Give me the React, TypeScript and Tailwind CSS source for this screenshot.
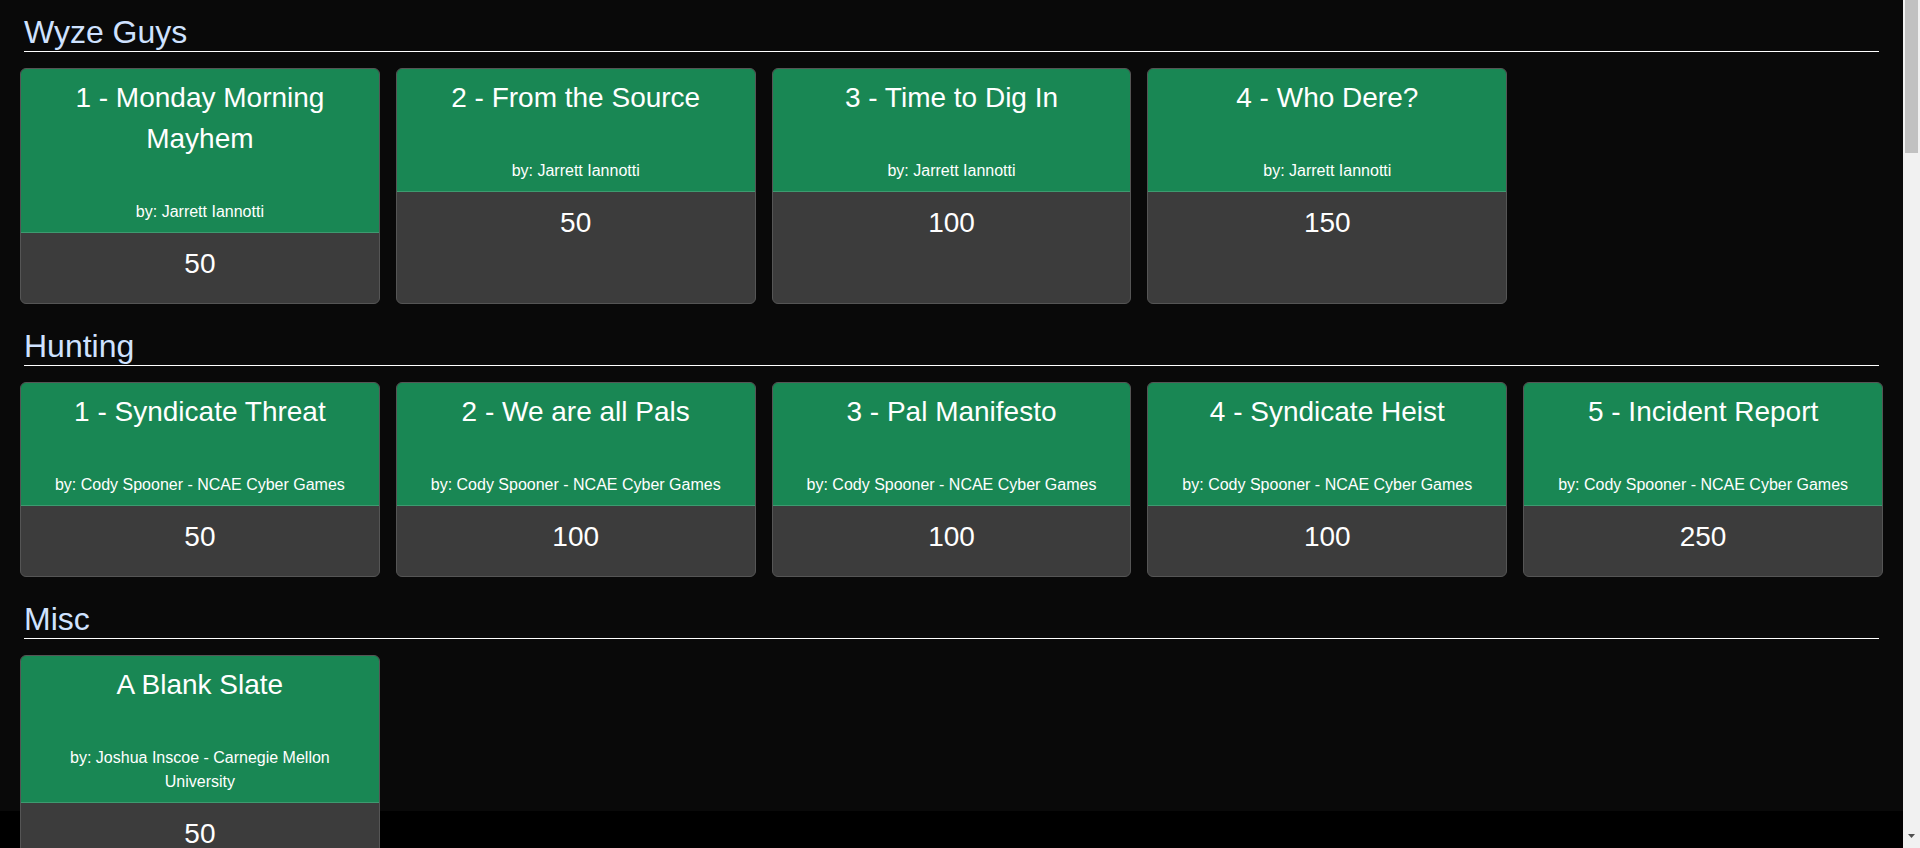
import React from "react";

type Challenge = { title: string; by: string; points: number };
type Section = { name: string; items: Challenge[] };

const sections: Section[] = [
  {
    name: "Wyze Guys",
    items: [
      { title: "1 - Monday Morning Mayhem", by: "Jarrett Iannotti", points: 50 },
      { title: "2 - From the Source", by: "Jarrett Iannotti", points: 50 },
      { title: "3 - Time to Dig In", by: "Jarrett Iannotti", points: 100 },
      { title: "4 - Who Dere?", by: "Jarrett Iannotti", points: 150 },
    ],
  },
  {
    name: "Hunting",
    items: [
      { title: "1 - Syndicate Threat", by: "Cody Spooner - NCAE Cyber Games", points: 50 },
      { title: "2 - We are all Pals", by: "Cody Spooner - NCAE Cyber Games", points: 100 },
      { title: "3 - Pal Manifesto", by: "Cody Spooner - NCAE Cyber Games", points: 100 },
      { title: "4 - Syndicate Heist", by: "Cody Spooner - NCAE Cyber Games", points: 100 },
      { title: "5 - Incident Report", by: "Cody Spooner - NCAE Cyber Games", points: 250 },
    ],
  },
  {
    name: "Misc",
    items: [
      { title: "A Blank Slate", by: "Joshua Inscoe - Carnegie Mellon University", points: 50 },
    ],
  },
];

function Card({ c }: { c: Challenge }) {
  return (
    <div className="flex flex-col overflow-hidden rounded-[6px] border border-[#555555] bg-[#3c3c3c]">
      <div className="border-b border-[#3d9b70] bg-[#198754] px-4 pt-2 pb-2 text-center text-white">
        <div className="text-[28px] leading-[41px]">{c.title}</div>
        <div className="mt-[41px] text-[16px] leading-6">by: {c.by}</div>
      </div>
      <div className="flex-1 pt-[10px] pb-[19px] text-center text-[28px] leading-[41px] text-white">
        {c.points}
      </div>
    </div>
  );
}

export default function App() {
  return (
    <div className="flex h-[848px] w-full overflow-hidden bg-black font-['Liberation_Sans',Arial,sans-serif]">
      <div className="min-w-0 flex-1">
        <div className="h-[811px] bg-[#090909] px-5 pt-[13px]">
          {sections.map((s, i) => (
            <section key={s.name} className={i > 0 ? "mt-[23px]" : ""}>
              <h2 className="mx-1 border-b border-white text-[32px] leading-[38px] text-[#cfe2ff]">
                {s.name}
              </h2>
              <div className="mt-4 grid grid-cols-5 gap-4">
                {s.items.map((c) => (
                  <Card key={c.title} c={c} />
                ))}
              </div>
            </section>
          ))}
        </div>
      </div>
      <div className="flex w-[17px] shrink-0 flex-col bg-[#f1f1f1]">
        <div className="mx-[2px] h-[153px] bg-[#c1c1c1]" />
        <div className="flex-1" />
        <div className="flex h-[14px] items-start justify-center">
          <svg width="7" height="4" viewBox="0 0 7 4">
            <path d="M0 0 L7 0 L3.5 4 Z" fill="#505050" />
          </svg>
        </div>
      </div>
    </div>
  );
}
